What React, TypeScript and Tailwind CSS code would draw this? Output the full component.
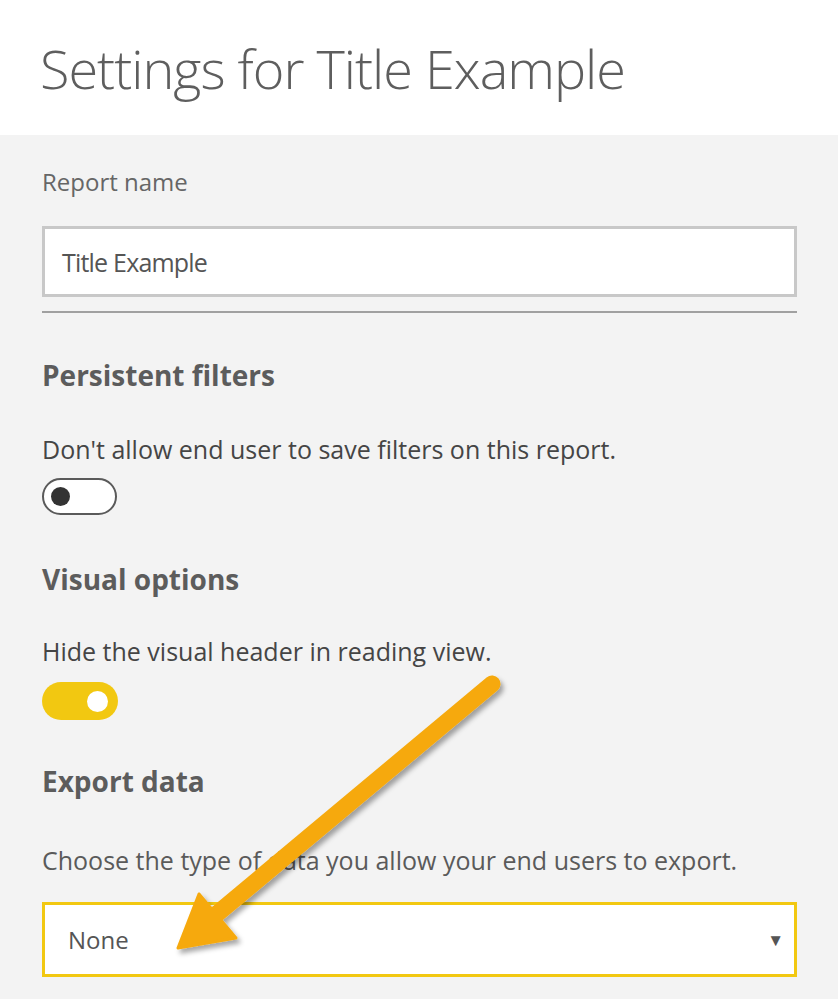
import React from 'react';

function Toggle({ on }: { on: boolean }) {
  if (on) {
    return (
      <div className="w-[76px] h-[38px] rounded-full bg-[#f2c811] flex items-center justify-end pr-[10px]">
        <div className="w-[21px] h-[21px] rounded-full bg-white" />
      </div>
    );
  }
  return (
    <div className="w-[75px] h-[37px] rounded-full border-2 border-[#5a5a5a] bg-white flex items-center pl-[7px]">
      <div className="w-[19px] h-[19px] rounded-full bg-[#333333]" />
    </div>
  );
}

export default function App() {
  return (
    <div className="relative w-[838px] h-[999px] overflow-hidden bg-[#f3f3f3] font-['Open_Sans',sans-serif]">
      {/* Header */}
      <div className="h-[135px] bg-white pl-[40px] pt-[41px]">
        <h1 className="text-[54px] leading-none font-light text-[#5e5e5e] tracking-[-1px]">
          Settings for Title Example
        </h1>
      </div>

      {/* Body */}
      <div className="pl-[42px] pr-[41px]">
        <p className="mt-[35px] text-[24px] leading-none text-[#666666]">Report name</p>

        <div className="mt-[32px] h-[71px] bg-white border-[3px] border-[#c8c8c8] flex items-center pl-[17px] pt-[3px]">
          <span className="text-[25px] text-[#555555] tracking-[-0.8px]">Title Example</span>
        </div>
        <div className="mt-[14px] h-[2px] bg-[#a0a0a0]" />

        <h2 className="mt-[48px] text-[28px] leading-none font-bold text-[#5c5c5c]">Persistent filters</h2>
        <p className="mt-[48px] text-[25px] leading-none text-[#454545]">Don't allow end user to save filters on this report.</p>
        <div className="mt-[16px]">
          <Toggle on={false} />
        </div>

        <h2 className="mt-[50px] text-[28px] leading-none font-bold text-[#5c5c5c]">Visual options</h2>
        <p className="mt-[46px] text-[25px] leading-none text-[#454545]">Hide the visual header in reading view.</p>
        <div className="mt-[18px]">
          <Toggle on={true} />
        </div>

        <h2 className="mt-[47px] text-[28px] leading-none font-bold text-[#5c5c5c]">Export data</h2>
        <p className="mt-[53px] text-[25px] leading-none text-[#5a5a5a]">Choose the type of data you allow your end users to export.</p>

        <div className="mt-[29px] h-[75px] bg-white border-[3px] border-[#f2c811] flex items-center justify-between pl-[23px] pr-[10px]">
          <span className="text-[24px] text-[#555555]">None</span>
          <span className="text-[17px] leading-none text-[#555555]">▼</span>
        </div>
      </div>

      {/* Annotation arrow */}
      <svg className="absolute left-0 top-0 pointer-events-none" width="838" height="999" viewBox="0 0 838 999">
        <defs>
          <filter id="sh" x="-20%" y="-20%" width="140%" height="140%">
            <feDropShadow dx="3" dy="4" stdDeviation="2.5" floodColor="#000000" floodOpacity="0.35" />
          </filter>
        </defs>
        <g filter="url(#sh)" fill="#f6a90c" stroke="#f6a90c">
          <line x1="492" y1="684" x2="212" y2="918" strokeWidth="17" strokeLinecap="round" />
          <polygon points="178,948 199,894 236,938" strokeWidth="3" strokeLinejoin="round" />
        </g>
      </svg>
    </div>
  );
}
